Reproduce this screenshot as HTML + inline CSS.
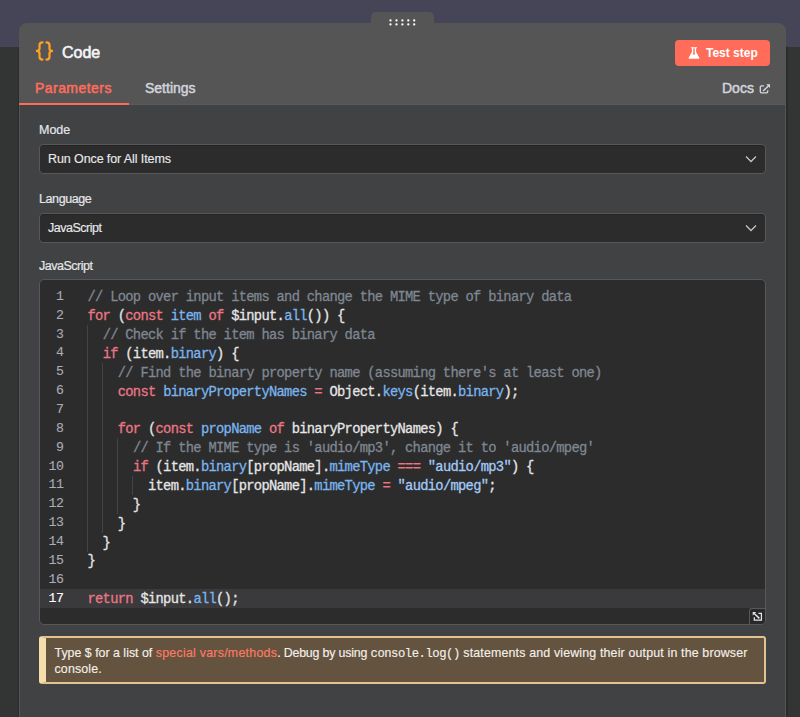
<!DOCTYPE html>
<html><head><meta charset="utf-8">
<style>
*{box-sizing:border-box;margin:0;padding:0}
html,body{width:800px;height:717px;overflow:hidden;background:#333434;font-family:"Liberation Sans",sans-serif}
.abs{position:absolute}
#topband{left:0;top:0;width:800px;height:47px;background:#464557}
#tab{z-index:5;left:371px;top:12px;width:63px;height:16px;background:#555556;border-radius:5px 5px 0 0}
.dot{position:absolute;width:2.4px;height:2.4px;border-radius:50%;background:#fff}
#shadowL{left:18px;top:47px;width:1px;height:670px;background:#2b2b2c}
#shadowR{left:786px;top:47px;width:2px;height:670px;background:#2b2b2c}
#panel{left:19px;top:23px;width:767px;height:720px;background:#555556;border-radius:8px 8px 0 0}
#body{left:20px;top:105px;width:765px;height:620px;background:#414244}
#hdrline{left:20px;top:104px;width:765px;height:1px;background:#5a5a5b}
#title{left:62px;top:44px;font-size:16px;color:#f4f4f6;-webkit-text-stroke:0.6px #f4f4f6}
#btn{left:675px;top:40px;width:95px;height:26px;background:#ff6d5a;border-radius:4px}
#btntxt{left:706px;top:46px;font-size:12px;font-weight:bold;color:#fff}
.tabt{top:80px;font-size:14px;-webkit-text-stroke:0.5px currentColor}
#tParams{left:35px;color:#ff6d5a;letter-spacing:0.45px}
#tSettings{left:145px;color:#d2d3da}
#tDocs{left:722px;color:#d2d3da}
#uline{left:19px;top:103px;width:110px;height:2px;background:#ff6d5a}
.lbl{font-size:12.5px;color:#e6e6ea;-webkit-text-stroke:0.2px currentColor}
.sel{left:39px;width:727px;height:30px;background:#2c2c2c;border:1px solid #58585a;border-radius:4px;box-shadow:inset 0 1px 0 #242424}
.seltxt{font-size:12.5px;color:#e8e8ec;-webkit-text-stroke:0.15px currentColor}
#editor{left:39px;top:279px;width:727px;height:346px;background:#2c2c2d;border:1px solid #58585a;border-radius:5px;overflow:hidden}
#code{position:absolute;left:0;top:7.5px;width:725px;font-family:"Liberation Mono",monospace;font-size:13.8px;letter-spacing:-0.7187px;line-height:18.86px;-webkit-text-stroke:0.28px currentColor}
.ln{position:relative;height:18.86px}
.ln .n{position:absolute;left:0;top:0.4px;width:23.4px;text-align:right;color:#a9adb6;font-size:13.2px;letter-spacing:-0.5px;-webkit-text-stroke:0.1px currentColor}
.ln .c{position:absolute;left:47.5px;top:1.9px;color:#e6e6e6;white-space:pre}
.act{background:#3a3a3c}
.act .n{color:#fff}
.g{position:absolute;top:0;width:1px;height:18.86px;background:#444446}
.k{color:#ec7784}
.d{color:#7ab5ee}
.s{color:#a3cbf7}
.cm{color:#7f8791}
#resz{left:749px;top:608px;width:16px;height:16px;background:#29292a;border-left:1px solid #58585a;border-top:1px solid #58585a;border-radius:3px 0 4px 0}
#info{left:39px;top:636px;width:727px;height:48px;background:#63533f;border:2px solid #e3c391;border-left:7px solid #f5ddac;border-radius:3px}
#infotxt{left:54.5px;top:645.5px;width:705px;font-size:12.4px;line-height:15.2px;color:#f3efe9;-webkit-text-stroke:0.15px currentColor}
.mono{font-family:"Liberation Mono",monospace;font-size:12.2px}
</style></head>
<body>
<div id="topband" class="abs"></div>
<div id="shadowL" class="abs"></div>
<div id="shadowR" class="abs"></div>
<div id="tab" class="abs"><svg width="63" height="16" style="position:absolute;left:0;top:0"><circle cx="19.5" cy="8.4" r="1.15" fill="#fff"/><circle cx="25.5" cy="8.4" r="1.15" fill="#fff"/><circle cx="31.4" cy="8.4" r="1.15" fill="#fff"/><circle cx="37.3" cy="8.4" r="1.15" fill="#fff"/><circle cx="43.2" cy="8.4" r="1.15" fill="#fff"/><circle cx="19.5" cy="12.4" r="1.15" fill="#fff"/><circle cx="25.5" cy="12.4" r="1.15" fill="#fff"/><circle cx="31.4" cy="12.4" r="1.15" fill="#fff"/><circle cx="37.3" cy="12.4" r="1.15" fill="#fff"/><circle cx="43.2" cy="12.4" r="1.15" fill="#fff"/></svg></div>
<div id="panel" class="abs"></div>
<div id="hdrline" class="abs"></div>
<div id="body" class="abs"></div>

<svg class="abs" style="left:33px;top:40px" width="22" height="22" viewBox="0 0 22 22">
  <path d="M9.5 2.4 C7.2 2.4 6.5 3.4 6.5 5.2 V8.8 C6.5 10.2 5.4 11 3 11 C5.4 11 6.5 11.8 6.5 13.2 V16.8 C6.5 18.6 7.2 19.6 9.5 19.6" fill="none" stroke="#ffa126" stroke-width="2.2" stroke-linecap="round"/>
  <path d="M13.5 2.4 C15.8 2.4 16.5 3.4 16.5 5.2 V8.8 C16.5 10.2 17.6 11 20 11 C17.6 11 16.5 11.8 16.5 13.2 V16.8 C16.5 18.6 15.8 19.6 13.5 19.6" fill="none" stroke="#ffa126" stroke-width="2.2" stroke-linecap="round"/>
</svg>
<div id="title" class="abs">Code</div>

<div id="btn" class="abs"></div>
<svg class="abs" style="left:688px;top:46px" width="12" height="14" viewBox="0 0 12 14">
  <path d="M2.9 1.2 H9 V2.3 H8.1 V6 L11.2 11.4 C11.6 12.2 11.2 12.8 10.4 12.8 H1.6 C0.8 12.8 0.4 12.2 0.8 11.4 L3.9 6 V2.3 H2.9 Z M5.3 2.3 V7.2 L4.6 8.6 H7.4 L6.7 7.2 V2.3 Z" fill="#fff" fill-rule="evenodd"/>
</svg>
<div id="btntxt" class="abs">Test step</div>

<div id="tParams" class="abs tabt">Parameters</div>
<div id="tSettings" class="abs tabt">Settings</div>
<div id="tDocs" class="abs tabt">Docs</div>
<svg class="abs" style="left:759px;top:84px" width="12" height="11" viewBox="0 0 12 11">
  <path d="M5 1.8 H2.4 C1.7 1.8 1.3 2.2 1.3 2.9 V7.8 C1.3 8.5 1.7 8.9 2.4 8.9 H7.6 C8.3 8.9 8.7 8.5 8.7 7.8 V6.3" fill="none" stroke="#d6d8e0" stroke-width="1.3"/>
  <path d="M4.1 7 L9.4 1.9" stroke="#d6d8e0" stroke-width="1.4"/>
  <path d="M7.2 0.3 H11 V4.1 Z" fill="#d6d8e0"/>
</svg>
<div id="uline" class="abs"></div>

<div class="abs lbl" style="left:39px;top:123px">Mode</div>
<div class="abs sel" style="top:144px"></div>
<div class="abs seltxt" style="left:48px;top:152.3px;letter-spacing:-0.1px">Run Once for All Items</div>
<svg class="abs" style="left:745px;top:155px" width="12" height="8" viewBox="0 0 12 8"><path d="M1 1.5 L6 6.5 L11 1.5" fill="none" stroke="#c2c5ce" stroke-width="1.25"/></svg>

<div class="abs lbl" style="left:39px;top:192px;letter-spacing:-0.4px">Language</div>
<div class="abs sel" style="top:213px"></div>
<div class="abs seltxt" style="left:48px;top:221.3px;letter-spacing:-0.5px">JavaScript</div>
<svg class="abs" style="left:745px;top:224px" width="12" height="8" viewBox="0 0 12 8"><path d="M1 1.5 L6 6.5 L11 1.5" fill="none" stroke="#c2c5ce" stroke-width="1.25"/></svg>

<div class="abs lbl" style="left:39px;top:259px;letter-spacing:-0.5px">JavaScript</div>

<div id="editor" class="abs">
<div id="code">
<div class="ln"><span class="n">1</span><span class="c"><span class="cm">// Loop over input items and change the MIME type of binary data</span></span></div>
<div class="ln"><span class="n">2</span><span class="c"><span class="k">for</span> (<span class="k">const</span> <span class="d">item</span> <span class="k">of</span> $input.<span class="d">all</span>()) {</span></div>
<div class="ln"><span class="n">3</span><i class="g" style="left:47px"></i><span class="c">  <span class="cm">// Check if the item has binary data</span></span></div>
<div class="ln"><span class="n">4</span><i class="g" style="left:47px"></i><span class="c">  <span class="k">if</span> (item.<span class="d">binary</span>) {</span></div>
<div class="ln"><span class="n">5</span><i class="g" style="left:47px"></i><i class="g" style="left:62px"></i><span class="c">    <span class="cm">// Find the binary property name (assuming there's at least one)</span></span></div>
<div class="ln"><span class="n">6</span><i class="g" style="left:47px"></i><i class="g" style="left:62px"></i><span class="c">    <span class="k">const</span> <span class="d">binaryPropertyNames</span> <span class="k">=</span> Object.<span class="d">keys</span>(item.<span class="d">binary</span>);</span></div>
<div class="ln"><span class="n">7</span><i class="g" style="left:47px"></i><i class="g" style="left:62px"></i><span class="c"> </span></div>
<div class="ln"><span class="n">8</span><i class="g" style="left:47px"></i><i class="g" style="left:62px"></i><span class="c">    <span class="k">for</span> (<span class="k">const</span> <span class="d">propName</span> <span class="k">of</span> binaryPropertyNames) {</span></div>
<div class="ln"><span class="n">9</span><i class="g" style="left:47px"></i><i class="g" style="left:62px"></i><i class="g" style="left:77px"></i><span class="c">      <span class="cm">// If the MIME type is 'audio/mp3', change it to 'audio/mpeg'</span></span></div>
<div class="ln"><span class="n">10</span><i class="g" style="left:47px"></i><i class="g" style="left:62px"></i><i class="g" style="left:77px"></i><span class="c">      <span class="k">if</span> (item.<span class="d">binary</span>[propName].<span class="d">mimeType</span> <span class="k">===</span> <span class="s">"audio/mp3"</span>) {</span></div>
<div class="ln"><span class="n">11</span><i class="g" style="left:47px"></i><i class="g" style="left:62px"></i><i class="g" style="left:77px"></i><i class="g" style="left:92px"></i><span class="c">        item.<span class="d">binary</span>[propName].<span class="d">mimeType</span> <span class="k">=</span> <span class="s">"audio/mpeg"</span>;</span></div>
<div class="ln"><span class="n">12</span><i class="g" style="left:47px"></i><i class="g" style="left:62px"></i><i class="g" style="left:77px"></i><span class="c">      }</span></div>
<div class="ln"><span class="n">13</span><i class="g" style="left:47px"></i><i class="g" style="left:62px"></i><span class="c">    }</span></div>
<div class="ln"><span class="n">14</span><i class="g" style="left:47px"></i><span class="c">  }</span></div>
<div class="ln"><span class="n">15</span><span class="c">}</span></div>
<div class="ln"><span class="n">16</span><span class="c"> </span></div>
<div class="ln act"><span class="n">17</span><span class="c"><span class="k">return</span> $input.<span class="d">all</span>();</span></div>
</div>
</div>
<div id="resz" class="abs">
<svg style="position:absolute;left:-1px;top:-1px" width="17" height="17" viewBox="0 0 17 17">
  <path d="M5.3 9.2 V12.1 H12.4 V5.3 H9.4" fill="none" stroke="#e4e4ea" stroke-width="1.25"/>
  <path d="M5.2 5.5 L10.4 10.4" stroke="#e4e4ea" stroke-width="1.5"/>
  <path d="M3.7 4 H7.2 L3.7 7.5 Z" fill="#e4e4ea"/>
</svg>
</div>

<div id="info" class="abs"></div>
<div id="infotxt" class="abs">Type $ for a list of <span style="color:#ff7a66;letter-spacing:0.25px">special vars/methods</span><span style="letter-spacing:-0.18px">. Debug by using </span><span class="mono" style="letter-spacing:-0.45px">console.log()</span><span style="letter-spacing:0.16px"> statements and viewing their output in the browser console.</span></div>
</body></html>
